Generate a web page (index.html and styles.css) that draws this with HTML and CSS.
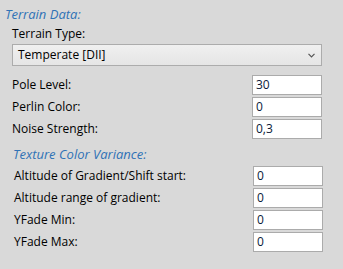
FILE: index.html
```html
<!DOCTYPE html>
<html>
<head>
<meta charset="utf-8">
<link rel="stylesheet" href="styles.css">
</head>
<body>
<div class="panel">
  <div class="heading h1">Terrain Data:</div>
  <div class="group g1">
    <div class="label type-label">Terrain Type:</div>
    <div class="dropdown">
      <span class="dd-text">Temperate [DII]</span>
      <svg class="chev" width="7" height="5" viewBox="0 0 7 5"><path d="M0.5 0.8 L3.5 3.8 L6.5 0.8" fill="none" stroke="#555" stroke-width="1.2"/></svg>
    </div>
    <div class="rows r1">
      <div class="row"><span class="label">Pole Level:</span><div class="field">30</div></div>
      <div class="row"><span class="label">Perlin Color:</span><div class="field">0</div></div>
      <div class="row"><span class="label">Noise Strength:</span><div class="field">0,3</div></div>
    </div>
  </div>
  <div class="heading h2">Texture Color Variance:</div>
  <div class="group g2">
    <div class="rows">
      <div class="row"><span class="label">Altitude of Gradient/Shift start:</span><div class="field">0</div></div>
      <div class="row"><span class="label">Altitude range of gradient:</span><div class="field">0</div></div>
      <div class="row"><span class="label">YFade Min:</span><div class="field">0</div></div>
      <div class="row"><span class="label">YFade Max:</span><div class="field">0</div></div>
    </div>
  </div>
</div>
</body>
</html>
```

FILE: styles.css
```css
html, body {
  margin: 0;
  padding: 0;
  background: #d9d9d9;
}
body {
  width: 343px;
  height: 269px;
  overflow: hidden;
  font-family: "Open Sans", "Noto Sans", sans-serif;
  font-size: 12px;
  color: #000;
}
.panel {
  padding-top: 6px;
}
.heading {
  font-style: italic;
  color: #2f72b6;
  font-size: 13px;
  line-height: 16px;
}
.h1 {
  margin-left: 5px;
}
.h2 {
  margin-left: 13px;
  margin-top: 7px;
}
.label {
  line-height: 16px;
  white-space: nowrap;
}
.g1 {
  margin-left: 12px;
  width: 310px;
}
.type-label {
  margin-top: 4px;
}
.dropdown {
  margin-top: 2px;
  box-sizing: border-box;
  height: 22px;
  border: 1px solid #acacac;
  background: linear-gradient(#f0f0f0, #e5e5e5);
  display: flex;
  align-items: center;
  justify-content: space-between;
  padding: 0 6px 0 5px;
}
.dd-text {
  line-height: 16px;
}
.chev {
  display: block;
  margin-top: 1px;
}
.rows {
  display: flex;
  flex-direction: column;
  gap: 2px;
}
.r1 {
  margin-top: 9px;
}
.row {
  display: flex;
  align-items: center;
  justify-content: space-between;
  height: 20px;
}
.field {
  box-sizing: border-box;
  width: 70px;
  height: 20px;
  border: 1px solid #ababab;
  background: #fff;
  color: #0a1a3a;
  line-height: 18px;
  padding-left: 3px;
}
.g2 {
  margin-left: 14px;
  width: 309px;
  margin-top: 4px;
}
```
